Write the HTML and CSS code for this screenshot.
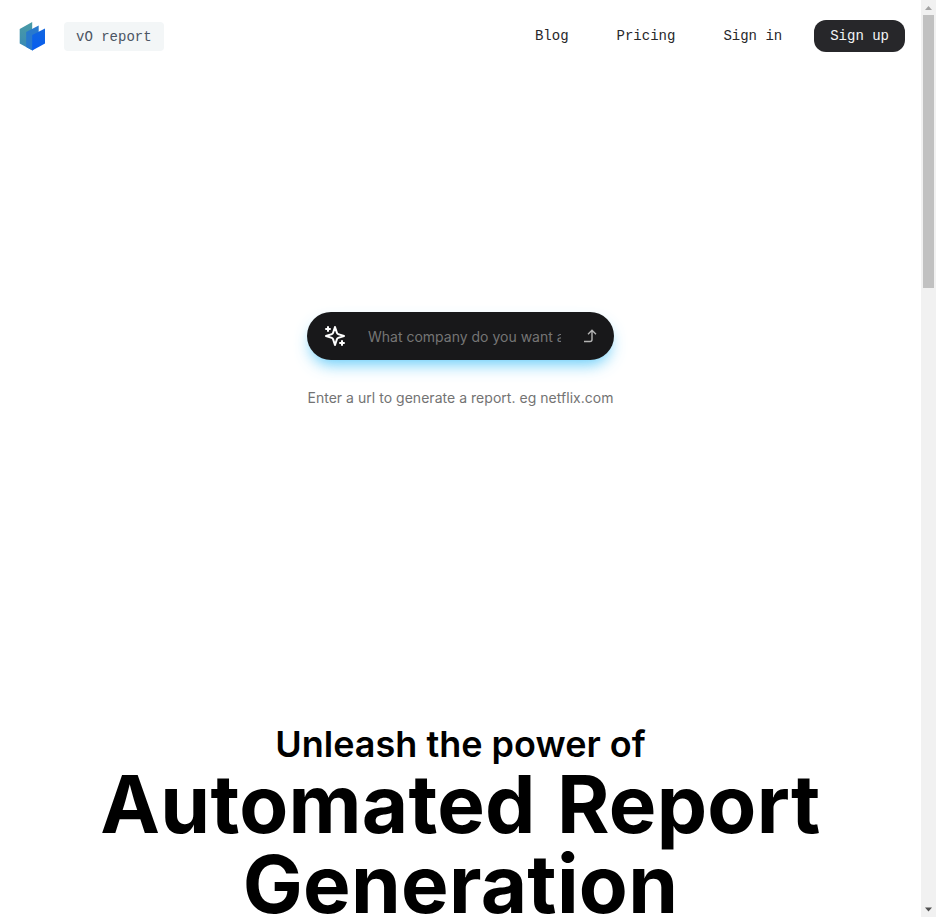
FILE: index.html
```html
<!DOCTYPE html>
<html lang="en">
<head>
<meta charset="utf-8">
<title>vO report</title>
<link rel="stylesheet" href="styles.css">
</head>
<body>
<div class="page">
  <header class="header">
    <a class="brand">
      <svg class="logo" width="28" height="30" viewBox="0 0 28 30">
        <defs>
          <linearGradient id="back" x1="0" y1="0" x2="0" y2="1"><stop offset="0" stop-color="#4a9ba5"/><stop offset="1" stop-color="#3788b7"/></linearGradient>
          <linearGradient id="front" x1="0" y1="0" x2="0" y2="1"><stop offset="0" stop-color="#1266df"/><stop offset="1" stop-color="#075df0"/></linearGradient>
        </defs>
        <path d="M.7 8 13.200 1v22.500L13.500 29.500 .7 22.500z" fill="url(#back)"/>
        <path d="M7.200 11 19.700 4.500V20l-6.200 9.500-6.300-3.500z" fill="#2879cd"/>
        <path d="M13.200 14 26 7.500V22.500L13.200 29.500z" fill="url(#front)"/>
      </svg>
      <span class="badge">vO report</span>
    </a>
    <nav class="nav">
      <a class="link">Blog</a>
      <a class="link">Pricing</a>
      <a class="link">Sign in</a>
      <a class="signup">Sign up</a>
    </nav>
  </header>
  <main>
    <section class="search">
      <form class="prompt">
        <svg class="sparkles" width="24" height="24" viewBox="0 0 24 24" fill="none" stroke="#fff" stroke-width="2" stroke-linecap="round" stroke-linejoin="round">
          <path d="m12 3-1.900 5.800a2 2 0 0 1-1.300 1.300L3 12l5.800 1.900a2 2 0 0 1 1.300 1.300L12 21l1.900-5.800a2 2 0 0 1 1.300-1.300L21 12l-5.800-1.900a2 2 0 0 1-1.300-1.300z"/>
          <path d="M5 3v4M3 5h4M19 17v4M17 19h4"/>
        </svg>
        <input class="field" type="text" placeholder="What company do you want a report on?">
        <svg class="submit" width="16" height="16" viewBox="0 0 16 16" fill="none" stroke="#b4b4b4" stroke-width="1.400">
          <path d="M2 13.500h6q2 0 2-2V2.500M6 6.300l4-4 4 4"/>
        </svg>
      </form>
      <p class="hint">Enter a url to generate a report. eg netflix.com</p>
    </section>
    <h1 class="title">Unleash the power of<span class="title-big">Automated Report Generation</span></h1>
  </main>
</div>
<div class="scrollbar">
  <svg width="15" height="15" viewBox="0 0 15 15"><path d="M4 10h7L7.500 6z" fill="#a3a3a3"/></svg>
  <div class="thumb"></div>
  <svg class="down" width="15" height="15" viewBox="0 0 15 15"><path d="M4 5.500h7l-3.500 4z" fill="#505050"/></svg>
</div>
</body>
</html>
```
FILE: styles.css
```css
* { box-sizing: border-box; }
body {
  margin: 0;
  height: 917px;
  display: flex;
  overflow: hidden;
  background: #fff;
  font-family: Inter, sans-serif;
}
.page { flex: 1; min-width: 0; }
.header {
  height: 72px;
  padding: 0 16px 0 19px;
  display: flex;
  align-items: center;
  justify-content: space-between;
  font: 14px/20px "Liberation Mono", monospace;
}
.brand { display: flex; align-items: center; gap: 17px; }
.logo { display: block; }
.badge {
  height: 29px;
  padding: 1px 12px 0;
  line-height: 29px;
  margin-top: 1px;
  border-radius: 4px;
  background: #f3f6f7;
  color: #4b5563;
}
.nav { display: flex; align-items: center; gap: 16px; color: #27272a; }
.link { padding: 0 16px; }
.signup {
  height: 32px;
  padding: 0 16px;
  line-height: 32px;
  border-radius: 12px;
  background: #27272a;
  color: #f4f4f5;
}
.search {
  padding-top: 240px;
  height: 652px;
  display: flex;
  flex-direction: column;
  align-items: center;
}
.prompt {
  width: 307px;
  height: 48px;
  padding: 0 16px;
  display: flex;
  align-items: center;
  border-radius: 24px;
  background: #18181a;
  box-shadow: 0 8px 16px -4px rgba(56, 189, 248, .8);
}
.sparkles { flex: none; }
.field {
  width: 193px;
  height: 24px;
  margin: 2px 21px 0 21px;
  padding: 0;
  border: 0;
  outline: 0;
  background: none;
  font: 14px/24px Inter, sans-serif;
}
.field::placeholder { color: #757575; opacity: 1; }
.submit { flex: none; }
.hint {
  margin: 28px 0 0;
  font-size: 14px;
  line-height: 20px;
  letter-spacing: .03px;
  color: #737373;
}
.title {
  margin: 0;
  text-align: center;
  font-size: 36px;
  line-height: 40px;
  font-weight: 600;
  color: #000;
}
.title-big {
  display: block;
  font-size: 80px;
  line-height: 80px;
  font-weight: 700;
  letter-spacing: .25px;
  word-spacing: 2px;
}
.scrollbar {
  width: 15px;
  display: flex;
  flex-direction: column;
  background: #f1f1f1;
}
.scrollbar svg { display: block; flex: none; }
.thumb { height: 273px; margin: 0 2px; background: #c1c1c1; }
.down { margin-top: auto; }
```
